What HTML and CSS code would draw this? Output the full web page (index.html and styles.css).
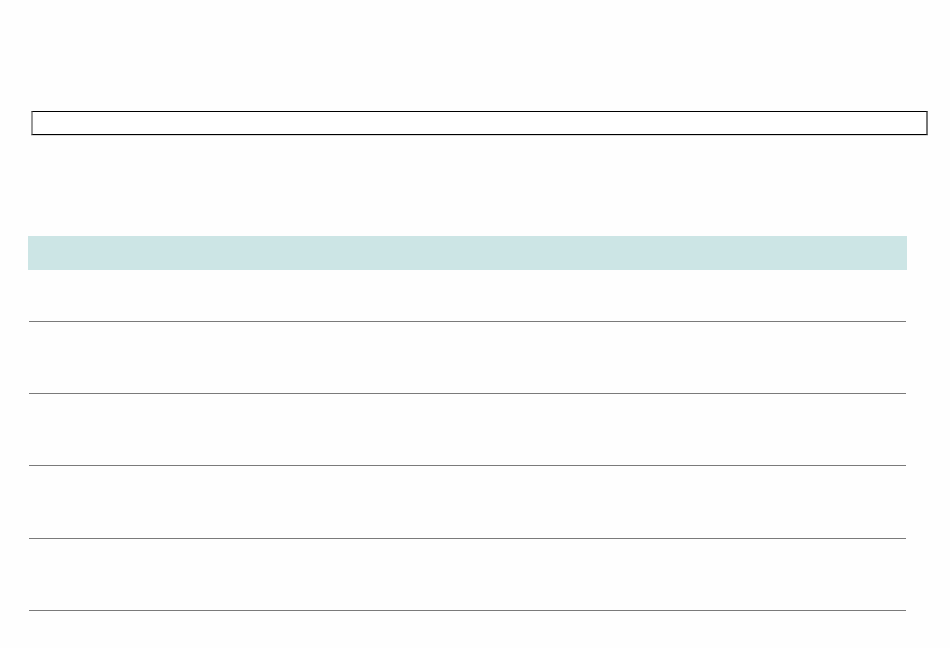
FILE: index.html
```html
<!DOCTYPE html>
<html lang="en">
<head>
<meta charset="utf-8">
<title>List</title>
<link rel="stylesheet" href="styles.css">
</head>
<body>
<div class="page">
  <div class="search" role="textbox" aria-label="Search"></div>
  <div class="table">
    <div class="thead"></div>
    <div class="row row-first"><div class="cell cell-a"></div><div class="cell cell-b"></div></div>
    <div class="row"><div class="cell cell-a"></div><div class="cell cell-b"></div></div>
    <div class="row"><div class="cell cell-a"></div><div class="cell cell-b"></div></div>
    <div class="row row-tall"><div class="cell cell-a"></div><div class="cell cell-b"></div></div>
    <div class="row"><div class="cell cell-a"></div><div class="cell cell-b"></div></div>
  </div>
</div>
</body>
</html>
```
FILE: styles.css
```css
html, body {
  margin: 0;
  padding: 0;
  background: #fefefe;
  font-family: "Liberation Sans", Arial, sans-serif;
}

.page {
  padding-top: 111px;
}

.search {
  box-sizing: border-box;
  margin-left: 31px;
  width: 897px;
  height: 24px;
  border-top: 1px solid #000;
  border-bottom: 1px solid #000;
  border-left: 2px solid #9a9a9a;
  border-right: 2px solid #777;
  box-shadow: 0 1px 0 #d8d8d8;
  background: #fff;
}

.table {
  margin-top: 101px;
  margin-left: 28px;
  width: 879px;
}

.thead {
  height: 34px;
  background: #cce5e5;
}

.row {
  display: flex;
  margin: 0 1px;
  height: 72px;
}

.row-first {
  height: 52px;
}

.row-tall {
  height: 73px;
}

.cell {
  box-sizing: border-box;
  height: 100%;
  border-bottom: 1px solid #7a7a7a;
}

.cell-a {
  width: 219px;
}

.cell-b {
  flex: 1;
}
```
